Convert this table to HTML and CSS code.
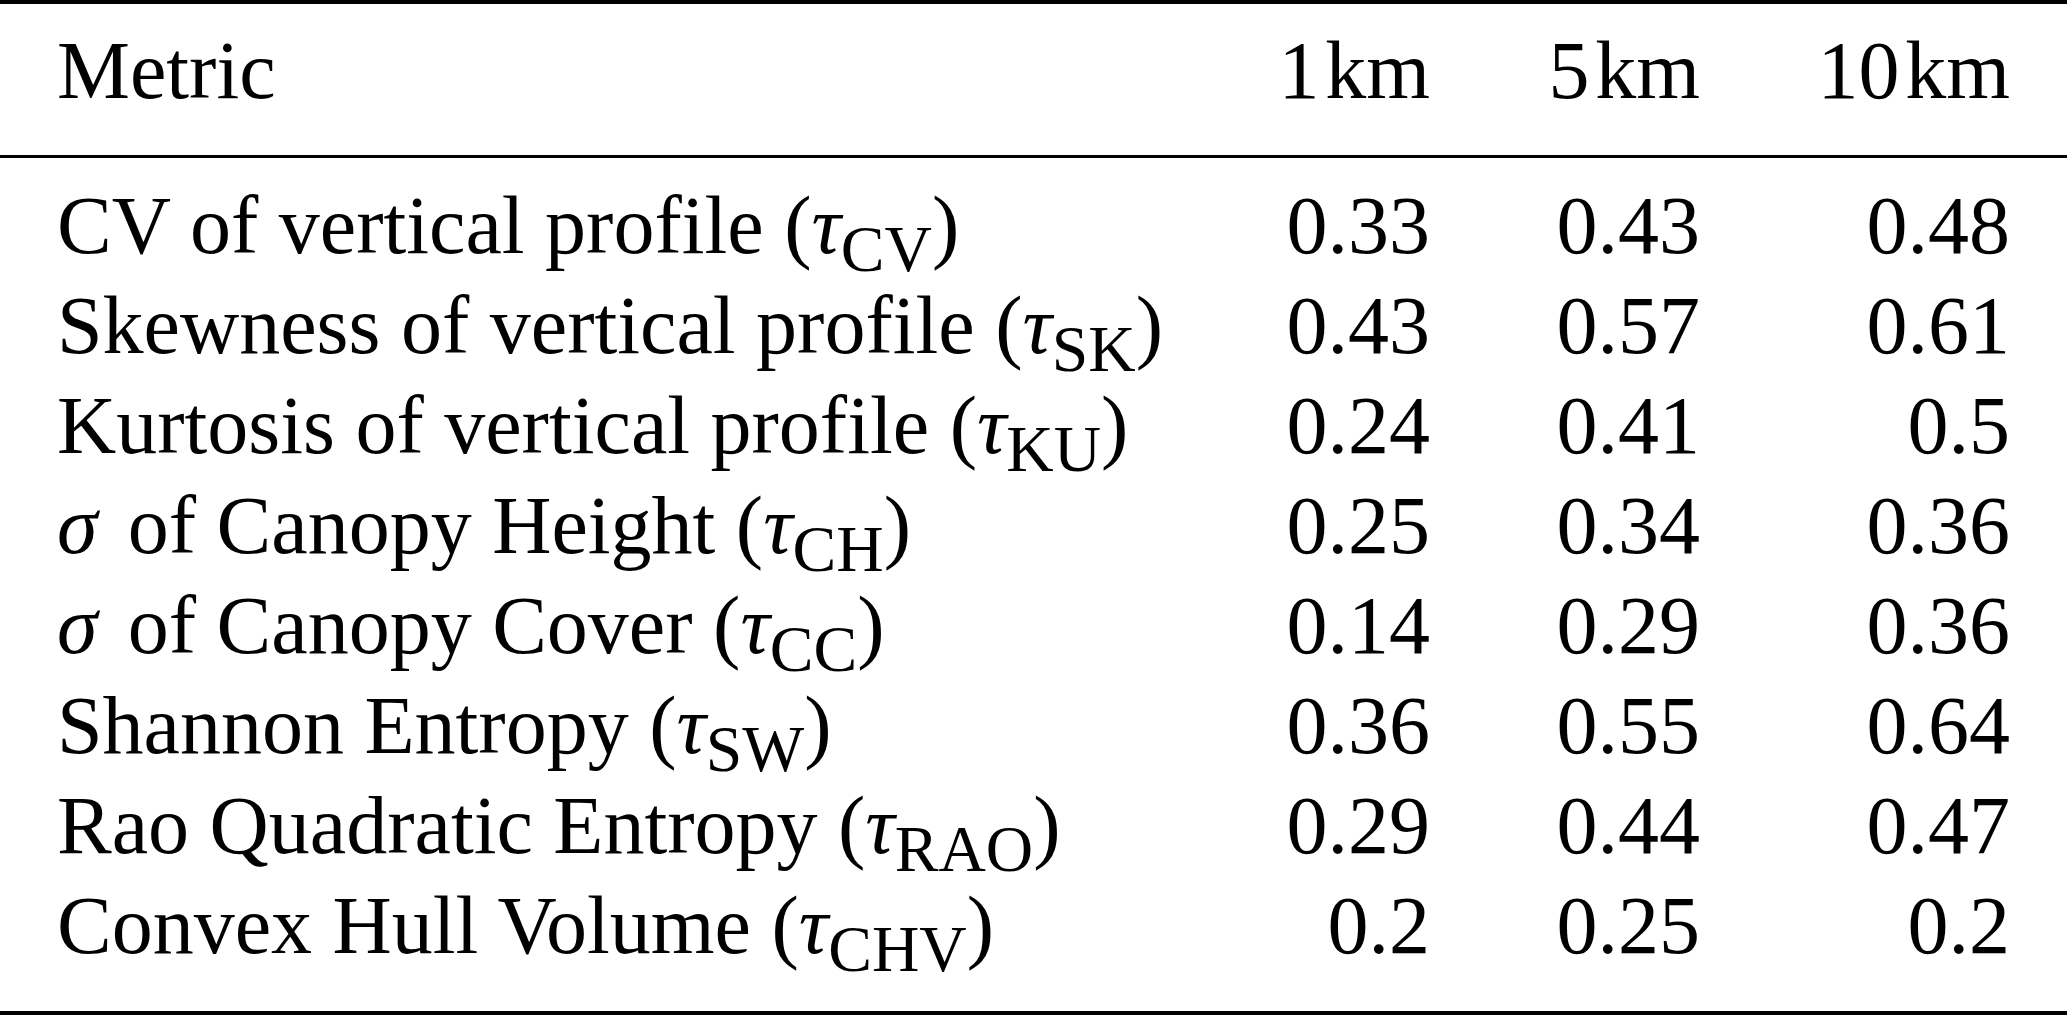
FILE: index.html
```html
<!DOCTYPE html>
<html lang="en">
<head>
<meta charset="utf-8">
<title>Metric table</title>
<link rel="stylesheet" href="styles.css">
</head>
<body>
<table class="metrics">
  <colgroup>
    <col class="c-name">
    <col class="c-num">
    <col class="c-num">
    <col class="c-last">
  </colgroup>
  <thead>
    <tr>
      <th class="num-h name">Metric</th>
      <th class="num">1<span class="unit">km</span></th>
      <th class="num">5<span class="unit">km</span></th>
      <th class="num last">10<span class="unit">km</span></th>
    </tr>
  </thead>
  <tbody>
    <tr class="first">
      <td class="name">CV of vertical profile (<i class="m">τ</i><span class="sub">CV</span>)</td>
      <td class="num">0.33</td><td class="num">0.43</td><td class="num last">0.48</td>
    </tr>
    <tr>
      <td class="name">Skewness of vertical profile (<i class="m">τ</i><span class="sub">SK</span>)</td>
      <td class="num">0.43</td><td class="num">0.57</td><td class="num last">0.61</td>
    </tr>
    <tr>
      <td class="name">Kurtosis of vertical profile (<i class="m">τ</i><span class="sub">KU</span>)</td>
      <td class="num">0.24</td><td class="num">0.41</td><td class="num last">0.5</td>
    </tr>
    <tr>
      <td class="name"><i class="m sig">σ</i> of Canopy Height (<i class="m">τ</i><span class="sub">CH</span>)</td>
      <td class="num">0.25</td><td class="num">0.34</td><td class="num last">0.36</td>
    </tr>
    <tr>
      <td class="name"><i class="m sig">σ</i> of Canopy Cover (<i class="m">τ</i><span class="sub">CC</span>)</td>
      <td class="num">0.14</td><td class="num">0.29</td><td class="num last">0.36</td>
    </tr>
    <tr>
      <td class="name">Shannon Entropy (<i class="m">τ</i><span class="sub">SW</span>)</td>
      <td class="num">0.36</td><td class="num">0.55</td><td class="num last">0.64</td>
    </tr>
    <tr>
      <td class="name">Rao Quadratic Entropy (<i class="m">τ</i><span class="sub">RAO</span>)</td>
      <td class="num">0.29</td><td class="num">0.44</td><td class="num last">0.47</td>
    </tr>
    <tr class="final">
      <td class="name">Convex Hull Volume (<i class="m">τ</i><span class="sub">CHV</span>)</td>
      <td class="num">0.2</td><td class="num">0.25</td><td class="num last">0.2</td>
    </tr>
  </tbody>
</table>
</body>
</html>
```

FILE: styles.css
```css
html, body {
  margin: 0;
  padding: 0;
  background: #ffffff;
}

body {
  font-family: "Liberation Serif", "Times New Roman", serif;
  font-size: 82px;
  color: #000000;
}

.metrics {
  width: 2067px;
  border-collapse: separate;
  border-spacing: 0;
  table-layout: fixed;
}

.c-name { width: 1170px; }
.c-num { width: 270px; }
.c-last { width: 357px; }

.metrics th,
.metrics td {
  font-weight: normal;
  line-height: 100px;
  padding: 0;
  white-space: nowrap;
}

.metrics th {
  border-top: 4px solid #000;
  border-bottom: 3px solid #000;
  padding-top: 17px;
  padding-bottom: 34px;
}

.metrics .first td { padding-top: 18px; }

.metrics .final td {
  padding-bottom: 35px;
  border-bottom: 4px solid #000;
}

.name {
  text-align: left;
  padding-left: 57px !important;
}

.num {
  text-align: right;
  padding-right: 10px !important;
}

.num.last { padding-right: 57px !important; }

.unit { margin-left: 0.07em; }

.m {
  font-style: italic;
}

.sig { margin-right: 0.12em; }

.sub {
  font-size: 0.8em;
  vertical-align: -0.28em;
  line-height: 0;
}
```
